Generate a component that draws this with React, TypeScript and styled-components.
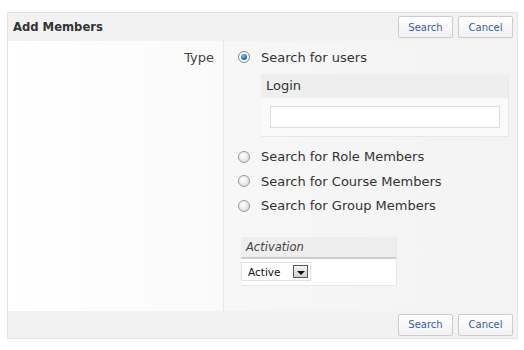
import React from "react";
import styled, { createGlobalStyle, css } from "styled-components";

const GlobalStyle = createGlobalStyle`
  html, body {
    margin: 0;
    padding: 0;
    background: #ffffff;
  }
  body {
    font-family: "DejaVu Sans", Verdana, sans-serif;
    color: #333333;
  }
`;

const Panel = styled.div`
  margin: 12px 0 0 7px;
  width: 511px;
  box-sizing: border-box;
  border: 1px solid #e4e4e4;
  display: flex;
  flex-direction: column;
`;

const Bar = styled.div<{ $height: number }>`
  height: ${(p) => p.$height}px;
  background: #f2f2f2;
  display: flex;
  align-items: center;
  padding: 0 4px 0 5px;
`;

const Title = styled.h2`
  margin: 0;
  flex: 1;
  font-size: 11.6px;
  font-weight: bold;
  color: #333333;
`;

const Actions = styled.div`
  margin-left: auto;
  display: flex;
  gap: 5px;
`;

const Button = styled.button`
  height: 22px;
  width: 55px;
  padding: 0;
  box-sizing: border-box;
  border: 1px solid #cccccc;
  border-radius: 2px;
  background: linear-gradient(#ffffff, #f1f1f1);
  color: #3b5ba5;
  font-family: "DejaVu Sans", Verdana, sans-serif;
  font-size: 10px;
  cursor: pointer;
`;

const Body = styled.div`
  height: 270px;
  display: grid;
  grid-template-columns: 216px 1fr;
`;

const LabelCell = styled.div`
  border-right: 1px solid #e8e8e8;
  background: linear-gradient(90deg, #ffffff 0%, #fafafa 100%);
  text-align: right;
  padding: 9px 9px 0 0;
  font-size: 13px;
  color: #444444;
`;

const FieldCell = styled.div`
  background: linear-gradient(90deg, #f7f7f7 0%, #f3f3f3 100%);
  padding: 4px 0 0 14px;
  display: flex;
  flex-direction: column;
`;

const Option = styled.label`
  display: flex;
  align-items: center;
  height: 24.5px;
  font-size: 13px;
  color: #333333;
`;

const Radio = styled.span<{ $checked?: boolean }>`
  width: 12px;
  height: 12px;
  box-sizing: border-box;
  border-radius: 50%;
  border: 1px solid #9a9a9a;
  margin-right: 11px;
  flex: none;
  background: radial-gradient(circle at 40% 35%, #ffffff 0%, #e6e6e6 60%, #cfcfcf 100%);
  position: relative;
  ${(p) =>
    p.$checked &&
    css`
      border-color: #808080;
      background: #ffffff;
      &::after {
        content: "";
        position: absolute;
        left: 2px;
        top: 2px;
        width: 6px;
        height: 6px;
        border-radius: 50%;
        background: radial-gradient(circle at 40% 35%, #8fd0ff 0%, #1a78c2 50%, #0b3f75 100%);
      }
    `}
`;

const Fieldset = styled.div<{ $width: number; $indent: number }>`
  width: ${(p) => p.$width}px;
  margin-left: ${(p) => p.$indent}px;
  box-sizing: border-box;
  background: #fafafa;
  border-right: 1px solid #e8e8e8;
  border-bottom: 1px solid #e8e8e8;
`;

const LegendRow = styled.div<{ $italic?: boolean }>`
  background: #eeeeee;
  font-size: ${(p) => (p.$italic ? 11.5 : 13)}px;
  font-style: ${(p) => (p.$italic ? "italic" : "normal")};
  height: ${(p) => (p.$italic ? 20 : 24)}px;
  line-height: ${(p) => (p.$italic ? 20 : 24)}px;
  padding-left: 5px;
  color: #333333;
  ${(p) =>
    p.$italic &&
    css`
      border-bottom: 2px solid #cccccc;
      color: #444444;
    `}
`;

const FieldsetBody = styled.div`
  padding: 8px 8px 8px 9px;
`;

const TextInput = styled.input`
  display: block;
  width: 230px;
  height: 22px;
  box-sizing: border-box;
  border: 1px solid #dddddd;
  background: #ffffff;
  outline: none;
`;

const SelectBody = styled.div`
  background: #ffffff;
  padding: 3px 0 4px 0;
`;

const SelectBox = styled.div`
  width: 70px;
  height: 19px;
  box-sizing: border-box;
  border: 1px solid #e0e0e0;
  background: #ffffff;
  display: flex;
  align-items: center;
  padding-left: 6px;
  font-size: 10.5px;
  color: #111111;
`;

const SelectArrow = styled.span`
  margin-left: auto;
  margin-right: 2px;
  width: 15px;
  height: 13px;
  box-sizing: border-box;
  border: 1px solid #555555;
  background: linear-gradient(#f4f4f4, #cfcfcf);
  display: flex;
  align-items: center;
  justify-content: center;
  &::after {
    content: "";
    margin-top: 3px;
    border-left: 4px solid transparent;
    border-right: 4px solid transparent;
    border-top: 4px solid #111111;
  }
`;

const options = [
  "Search for Role Members",
  "Search for Course Members",
  "Search for Group Members",
];

function ButtonPair() {
  return (
    <Actions>
      <Button>Search</Button>
      <Button>Cancel</Button>
    </Actions>
  );
}

export default function App() {
  return (
    <>
      <GlobalStyle />
      <Panel>
        <Bar $height={28}>
          <Title>Add Members</Title>
          <ButtonPair />
        </Bar>
        <Body>
          <LabelCell>Type</LabelCell>
          <FieldCell>
            <Option>
              <Radio $checked />
              Search for users
            </Option>
            <Fieldset $width={248} $indent={23} style={{ marginTop: 4, marginBottom: 8 }}>
              <LegendRow>Login</LegendRow>
              <FieldsetBody>
                <TextInput />
              </FieldsetBody>
            </Fieldset>
            {options.map((o) => (
              <Option key={o}>
                <Radio />
                {o}
              </Option>
            ))}
            <Fieldset $width={156} $indent={3} style={{ marginTop: 19 }}>
              <LegendRow $italic>Activation</LegendRow>
              <SelectBody>
                <SelectBox>
                  Active
                  <SelectArrow />
                </SelectBox>
              </SelectBody>
            </Fieldset>
          </FieldCell>
        </Body>
        <Bar $height={27}>
          <ButtonPair />
        </Bar>
      </Panel>
    </>
  );
}
